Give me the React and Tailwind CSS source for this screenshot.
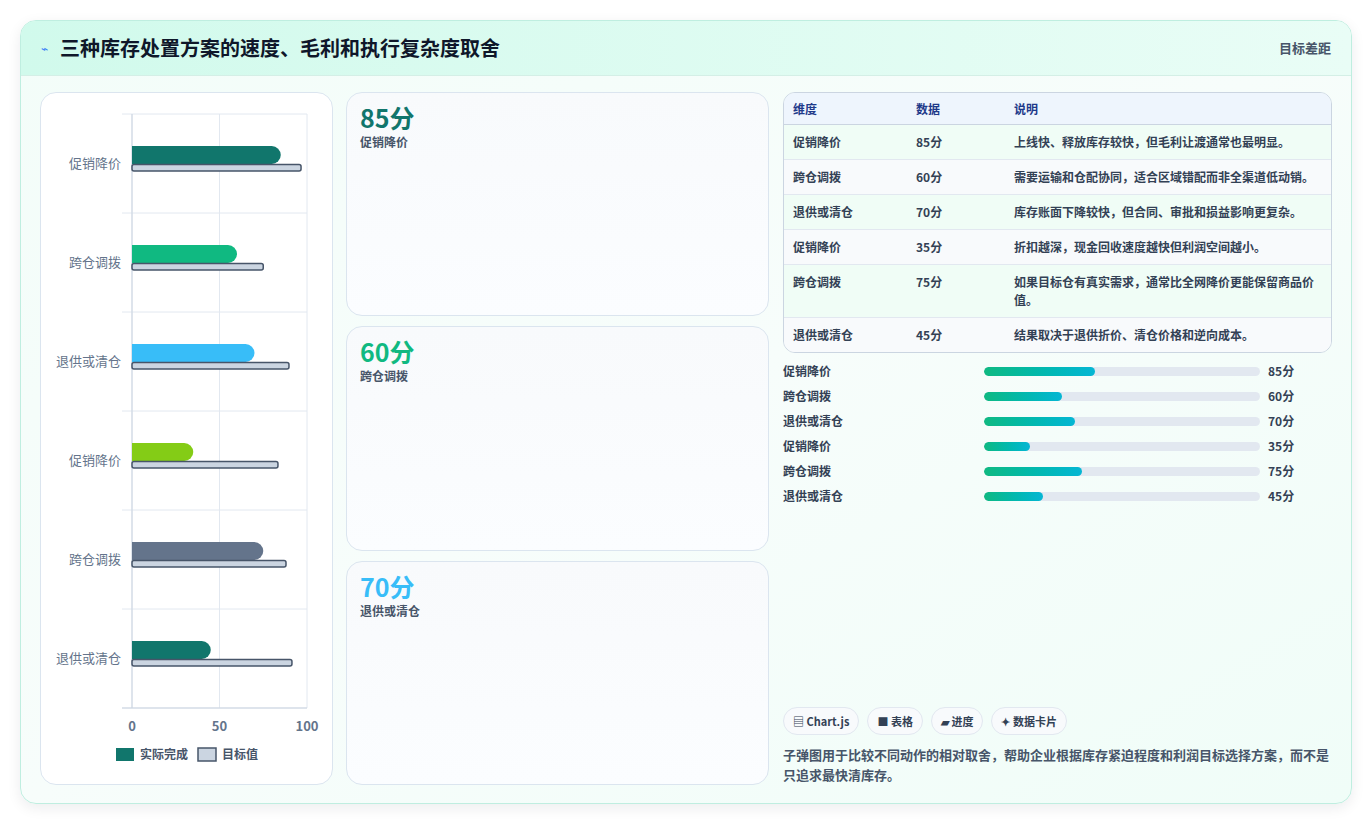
const F = { fontFamily: '"Noto Sans CJK SC", "Noto Sans", sans-serif' };
const rows = [
  ['促销降价', 85, 96.6, '#11766c'],
  ['跨仓调拨', 60, 75, '#10b981'],
  ['退供或清仓', 70, 89.7, '#38bdf8'],
  ['促销降价', 35, 83.4, '#84cc16'],
  ['跨仓调拨', 75, 88, '#64748b'],
  ['退供或清仓', 45, 91.4, '#11766c'],
];
const table = [
  ['促销降价', '85分', '上线快、释放库存较快，但毛利让渡通常也最明显。'],
  ['跨仓调拨', '60分', '需要运输和仓配协同，适合区域错配而非全渠道低动销。'],
  ['退供或清仓', '70分', '库存账面下降较快，但合同、审批和损益影响更复杂。'],
  ['促销降价', '35分', '折扣越深，现金回收速度越快但利润空间越小。'],
  ['跨仓调拨', '75分', '如果目标仓有真实需求，通常比全网降价更能保留商品价值。'],
  ['退供或清仓', '45分', '结果取决于退供折价、清仓价格和逆向成本。'],
];
const prog = [111, 78, 91, 46, 98, 59];

function Chart() {
  const x0 = 91, sc = 1.75, top = 21, h = 99;
  return (
    <svg width="292" height="690" style={F}>
      {[0, 50, 100].map((v) => (
        <line key={v} x1={x0 + v * sc} x2={x0 + v * sc} y1={top} y2={top + 6 * h} stroke="#e2e8f0" />
      ))}
      {[0, 1, 2, 3, 4, 5, 6].map((i) => (
        <line key={i} x1={x0 - 10} x2={x0 + 175} y1={top + i * h} y2={top + i * h} stroke="#e2e8f0" />
      ))}
      <line x1={x0} x2={x0} y1={top} y2={top + 6 * h} stroke="#cbd5e1" />
      <line x1={x0 - 10} x2={x0 + 175} y1={top + 6 * h} y2={top + 6 * h} stroke="#cbd5e1" />
      {rows.map(([l, a, t, c], i) => {
        const cy = top + i * h + 49;
        return (
          <g key={i}>
            <text x={x0 - 11} y={cy + 5} textAnchor="end" fontSize="13" fill="#64748b">{l}</text>
            <path d={`M${x0} ${cy - 17} H${x0 + a * sc - 9} A9 9 0 0 1 ${x0 + a * sc - 9} ${cy + 1} H${x0} Z`} fill={c} />
            <rect x={x0} y={cy + 1.5} width={t * sc} height={6.5} rx="2" fill="#cbd5e1" stroke="#475569" strokeWidth="1.5" />
          </g>
        );
      })}
      {[0, 50, 100].map((v) => (
        <text key={v} x={x0 + v * sc} y={top + 6 * h + 23} textAnchor="middle" fontSize="13" fontWeight="600" fill="#64748b">{v}</text>
      ))}
      <rect x="75" y="655" width="18" height="13" fill="#11766c" />
      <text x="99" y="666" fontSize="12" fontWeight="600" fill="#475569">实际完成</text>
      <rect x="157" y="655" width="18" height="13" fill="#cbd5e1" stroke="#475569" strokeWidth="1.5" />
      <text x="181" y="666" fontSize="12" fontWeight="600" fill="#475569">目标值</text>
    </svg>
  );
}

function Card({ v, l, c }) {
  return (
    <div className="flex-1 rounded-2xl border border-[#dbe5ef] bg-gradient-to-b from-[#f8fafc] to-[#fbfdff] px-[13px] py-[8px]">
      <div className={`text-[25px] font-bold leading-[32px] ${c}`}>{v}</div>
      <div className="text-[12px] font-semibold text-[#475569]">{l}</div>
    </div>
  );
}

export default function App() {
  return (
    <div className="w-[1372px] h-[825px] bg-white pt-[20px] px-[20px]" style={F}>
      <div className="h-[784px] w-[1332px] rounded-2xl border border-[#bfeee0] bg-gradient-to-br from-[#f3fdf9] via-[#f7fdfb] to-[#f0fdf8] shadow-[0_4px_14px_rgba(15,23,42,0.08)] overflow-hidden flex flex-col">
        <div className="h-[55px] shrink-0 flex items-center justify-between px-[20px] bg-gradient-to-r from-[#d1faec] to-[#e9fdf6] border-b border-[#d4efe6]">
          <div className="flex items-center gap-[12px]">
            <span className="text-[12px] text-[#3b82f6]">⌁</span>
            <span className="text-[20px] font-bold text-[#0f172a]">三种库存处置方案的速度、毛利和执行复杂度取舍</span>
          </div>
          <span className="text-[13px] font-semibold text-[#475569]">目标差距</span>
        </div>
        <div className="flex-1 flex gap-[13px] px-[19px] pt-[16px] pb-[18px]">
          <div className="w-[293px] rounded-2xl border border-[#dbe5ef] bg-white">
            <Chart />
          </div>
          <div className="w-[423px] flex flex-col gap-[10px]">
            <Card v="85分" l="促销降价" c="text-[#11766c]" />
            <Card v="60分" l="跨仓调拨" c="text-[#10b981]" />
            <Card v="70分" l="退供或清仓" c="text-[#38bdf8]" />
          </div>
          <div className="flex-1 flex flex-col pl-[1px]">
            <div className="rounded-xl border border-[#cbd5e1] overflow-hidden text-[12px] font-semibold text-[#334155]">
              <div className="flex h-[32px] items-center bg-[#eef5fd] border-b border-[#cbd5e1] text-[#1e3a8a]">
                <div className="w-[132px] pl-[9px]">维度</div><div className="w-[98px]">数据</div><div>说明</div>
              </div>
              {table.map((r, i) => (
                <div key={i} className={`flex py-[8px] border-b border-[#e2e8f0] last:border-b-0 leading-[18px] ${i % 2 === 0 ? 'bg-[#f0fdf6]' : 'bg-[#f8fafc]'}`}>
                  <div className="w-[132px] pl-[9px] shrink-0">{r[0]}</div>
                  <div className="w-[98px] shrink-0">{r[1]}</div>
                  <div className="pr-[6px]">{r[2]}</div>
                </div>
              ))}
            </div>
            <div className="mt-[9px] flex flex-col gap-[7px] text-[12px] font-semibold text-[#334155]">
              {table.map((r, i) => (
                <div key={i} className="flex items-center h-[18px]">
                  <div className="w-[201px]">{r[0]}</div>
                  <div className="w-[276px] h-[9px] rounded-full bg-[#e2e8f0] overflow-hidden">
                    <div className="h-full rounded-full bg-gradient-to-r from-[#10b981] to-[#06b6d4]" style={{ width: prog[i] }} />
                  </div>
                  <div className="ml-[8px]">{r[1]}</div>
                </div>
              ))}
            </div>
            <div className="mt-auto flex gap-[8px] text-[11px] font-semibold text-[#334155]">
              {['▤ Chart.js', '■ 表格', '▰ 进度', '✦ 数据卡片'].map((t) => (
                <span key={t} className="rounded-full border border-[#e2e8f0] bg-[#f8fafc] px-[9px] h-[28px] flex items-center">{t}</span>
              ))}
            </div>
            <p className="mt-[10px] text-[13px] font-semibold leading-[20px] text-[#475569]">子弹图用于比较不同动作的相对取舍，帮助企业根据库存紧迫程度和利润目标选择方案，而不是只追求最快清库存。</p>
          </div>
        </div>
      </div>
    </div>
  );
}
